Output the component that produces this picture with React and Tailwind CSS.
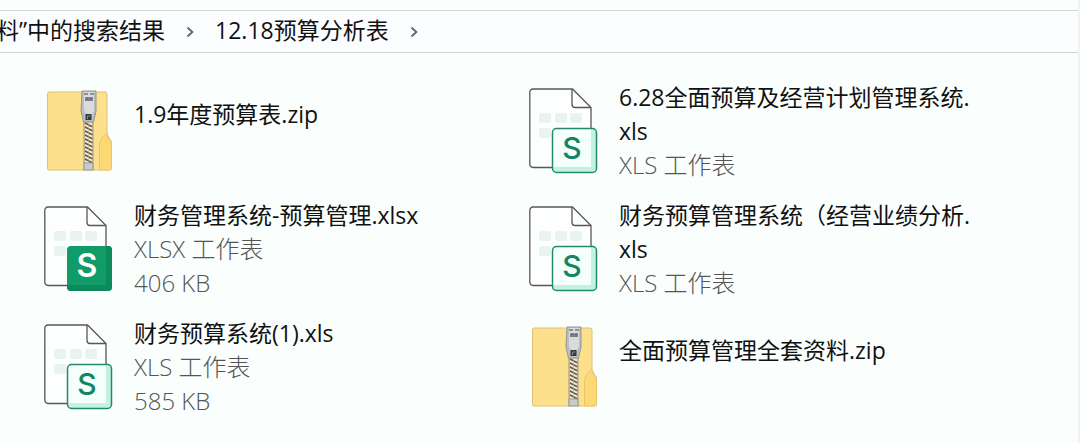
const FILES = [
  { name: "1.9年度预算表.zip", kind: "zip" },
  { name: "6.28全面预算及经营计划管理系统.xls", kind: "xls", type: "XLS 工作表" },
  { name: "财务管理系统-预算管理.xlsx", kind: "xlsx", type: "XLSX 工作表", size: "406 KB" },
  { name: "财务预算管理系统（经营业绩分析.xls", kind: "xls", type: "XLS 工作表" },
  { name: "财务预算系统(1).xls", kind: "xls", type: "XLS 工作表", size: "585 KB" },
  { name: "全面预算管理全套资料.zip", kind: "zip" },
];

const TEETH = [35, 39, 43, 47, 51, 55, 59, 63, 67, 71];

function ZipIcon() {
  return (
    <svg viewBox="0 0 72 86" className="h-[86px] w-[72px] shrink-0" aria-hidden="true">
      <path d="M5 4h56a2 2 0 0 1 2 2v40l4.500 8v26a2 2 0 0 1-2 2H5a1.500 1.500 0 0 1-1.500-1.500v-75A1.500 1.500 0 0 1 5 4z" fill="#fde08b" stroke="#dfc079" strokeWidth="1" />
      <path d="M63 45.500c-2 .5-5 3.500-6 6-1.500 3-1.500 4-1.500 8V82h10a2 2 0 0 0 2-2V57c0-3-1-4.500-2.500-6-1.500-1.500-1.500-3-2-5.500z" fill="#fdd976" stroke="#e9c766" strokeWidth="1" />
      <rect x="40" y="32" width="9" height="50" fill="#d3c39c" />
      {TEETH.map((y) => (
        <g key={y} strokeWidth="1.500">
          <path d={`M41 ${y}l3.500 2M45 ${y + 2}l3.500 2`} stroke="#5f5a55" />
          <path d={`M41 ${y + 2}l3 1.500M45 ${y}l3 1.500`} stroke="#f3ecd9" />
        </g>
      ))}
      <path d="M40 32v50M49 32v50" stroke="#a59a80" strokeWidth="1" />
      <path d="M38 3h14v20l-2.500 11h-10L37 23z" fill="#bcbfc1" stroke="#939598" strokeWidth="1" />
      <path d="M40 4h10v18l-2 5h-6l-2-5z" fill="#d9dbdc" />
      <path d="M40 6h4M46 6h4" fill="none" stroke="#77797c" strokeWidth="1.500" />
      <path d="M42 13v-3h2v3M46 13v-3h2v3" fill="none" stroke="#5e6266" strokeWidth="1.500" />
      <rect x="41.500" y="26" width="6" height="6" fill="#35383c" />
      <path d="M43.500 31v-3h3" fill="none" stroke="#888d91" strokeWidth="1" />
      <rect x="40" y="75" width="9" height="7" fill="#c9cbcc" stroke="#98999a" strokeWidth="1" />
    </svg>
  );
}

function SheetIcon({ filled }) {
  return (
    <svg viewBox="0 0 72 86" className="h-[86px] w-[72px] shrink-0" aria-hidden="true">
      <path d="M4 1h39.500L62 19.500V78a1.500 1.500 0 0 1-1.500 1.500H4A3.200 3.200 0 0 1 .8 76.300V4.200A3.200 3.200 0 0 1 4 1z" fill="#fdfefe" stroke="#5c5557" strokeWidth="1.300" />
      <path d="M43 1v15.500a3 3 0 0 0 3 3h16" fill="none" stroke="#5c5557" strokeWidth="1.300" />
      <g fill="#e9f3f2">
        <rect x="10" y="25" width="12" height="10" rx="2" />
        <rect x="26" y="25" width="12" height="10" rx="2" />
        <rect x="41" y="25" width="12" height="10" rx="2" />
        <rect x="10" y="40" width="12" height="10" rx="2" />
      </g>
      {filled ? (
        <>
          <rect x="23" y="40" width="45" height="45" rx="4" fill="#119b68" />
          <path d="M62 40h2a4 4 0 0 1 4 4v37a4 4 0 0 1-4 4H27a4 4 0 0 1-4-4v-2h39z" fill="#0d8a59" />
        </>
      ) : (
        <>
          <rect x="23.500" y="40.500" width="44" height="44" rx="4" fill="#f5fffc" />
          <path d="M62 41h2a3 3 0 0 1 3 3v37a3 3 0 0 1-3 3H27a3 3 0 0 1-3-3v-2h38z" fill="#c4f2e2" />
          <rect x="23.500" y="40.500" width="44" height="44" rx="4" fill="none" stroke="#218a6b" strokeWidth="1.500" />
        </>
      )}
      <text
        x="43"
        y="71"
        textAnchor="middle"
        className={filled ? "fill-white font-['Inter',sans-serif] text-[32px] font-semibold" : "fill-[#148562] font-['Inter',sans-serif] text-[30px] font-medium"}
      >
        S
      </text>
    </svg>
  );
}

function FileName({ name }) {
  const dot = name.lastIndexOf(".") + 1;
  return (
    <span className="block text-[#111]">
      {name.slice(0, dot)}
      <wbr />
      {name.slice(dot)}
    </span>
  );
}

function FileItem({ file }) {
  return (
    <li>
      <button type="button" className="flex h-[102px] w-full items-center gap-[18px] text-left">
        {file.kind === "zip" ? <ZipIcon /> : <SheetIcon filled={file.kind === "xlsx"} />}
        <span className={file.kind === "zip" ? "block max-w-[360px] pb-[34px]" : "block max-w-[360px]"}>
          <FileName name={file.name} />
          {file.type && <span className="block text-2xl leading-[34px] font-light text-[#555]">{file.type}</span>}
          {file.size && <span className="block text-2xl leading-[34px] font-light text-[#555]">{file.size}</span>}
        </span>
      </button>
    </li>
  );
}

function Chevron() {
  return (
    <svg viewBox="0 0 8 12" className="mt-1 h-3 w-2 shrink-0" aria-hidden="true">
      <path d="M1.500 1.500L6.300 6l-4.800 4.500" fill="none" stroke="#6b6b6b" strokeWidth="2" />
    </svg>
  );
}

export default function App() {
  return (
    <div className="min-h-screen overflow-hidden border-r-2 border-[#f0f3f4] bg-[#fafffe] font-['Open_Sans','Noto_Sans_CJK_SC',sans-serif] text-[23px] leading-[34px]">
      <nav aria-label="路径" className="mt-2.5 flex h-[43px] items-center border-y border-[#d3d6d7] bg-[#fcfdfe] pb-1 text-[#111]">
        <button type="button" className="-ml-1 whitespace-nowrap">料”中的搜索结果</button>
        <span className="flex w-[50px] justify-center"><Chevron /></span>
        <button type="button" className="whitespace-nowrap">12.18预算分析表</button>
        <span className="flex w-[50px] justify-center"><Chevron /></span>
      </nav>
      <ul className="grid grid-cols-2 gap-y-4 pt-[27px] pr-16 pb-6 pl-11">
        {FILES.map((file) => (
          <FileItem key={file.name} file={file} />
        ))}
      </ul>
    </div>
  );
}
